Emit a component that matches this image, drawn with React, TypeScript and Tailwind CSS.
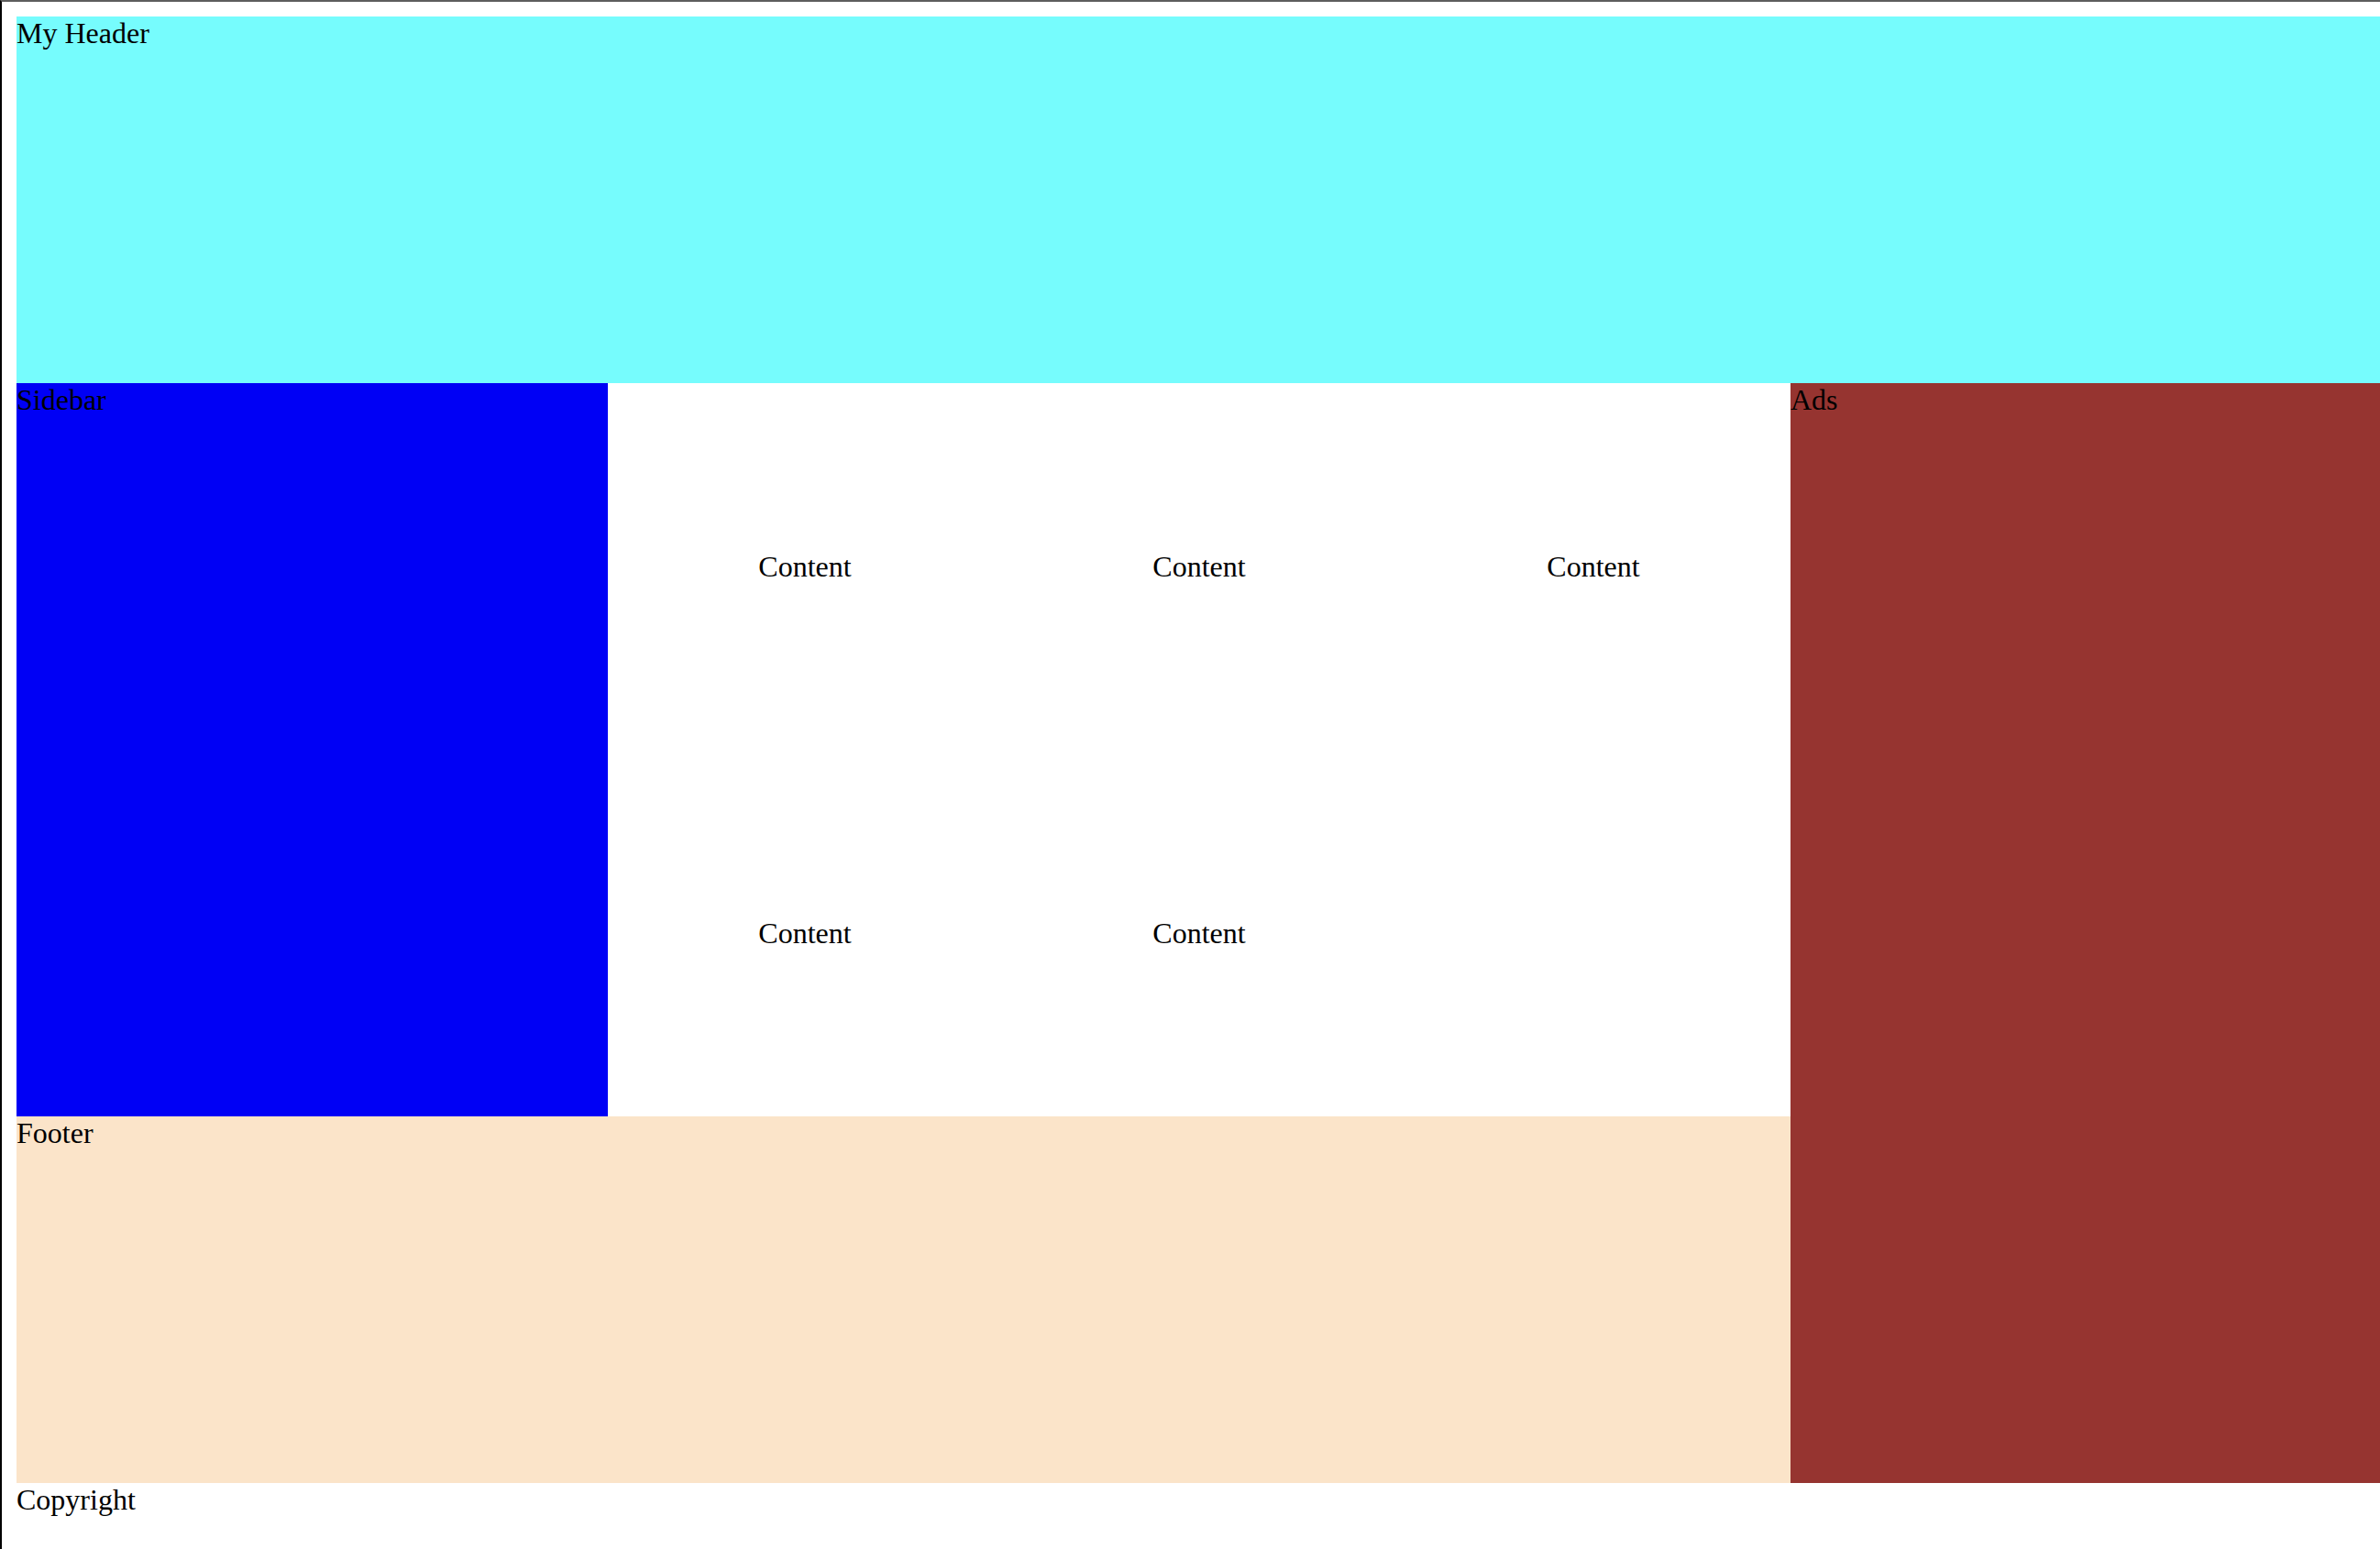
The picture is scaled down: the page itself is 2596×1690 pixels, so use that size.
export default function App() {
    return (
        <div className="min-h-screen overflow-hidden border-t-2 border-l-2 border-t-[#5e5e5e] border-l-black bg-white p-4 font-['Liberation_Serif',serif] text-[32px] leading-[37px] text-black">
            <div className="grid w-[2580px] grid-cols-[645px_1290px_645px] grid-rows-[400px_800px_400px]">
                {/* Header */}
                <div className="col-span-3 bg-[#76fcfd]">My Header</div>

                {/* Sidebar */}
                <div className="bg-[#0000f5]">Sidebar</div>

                {/* Content */}
                <div className="grid grid-cols-3 grid-rows-2">
                    <div className="flex items-center justify-center">Content</div>
                    <div className="flex items-center justify-center">Content</div>
                    <div className="flex items-center justify-center">Content</div>
                    <div className="flex items-center justify-center">Content</div>
                    <div className="flex items-center justify-center">Content</div>
                </div>

                {/* Ads */}
                <div className="row-span-2 bg-[#963430]">Ads</div>

                {/* Footer */}
                <div className="col-span-2 bg-[#fbe4c9]">Footer</div>
            </div>
            <div>Copyright</div>
        </div>
    );
}
